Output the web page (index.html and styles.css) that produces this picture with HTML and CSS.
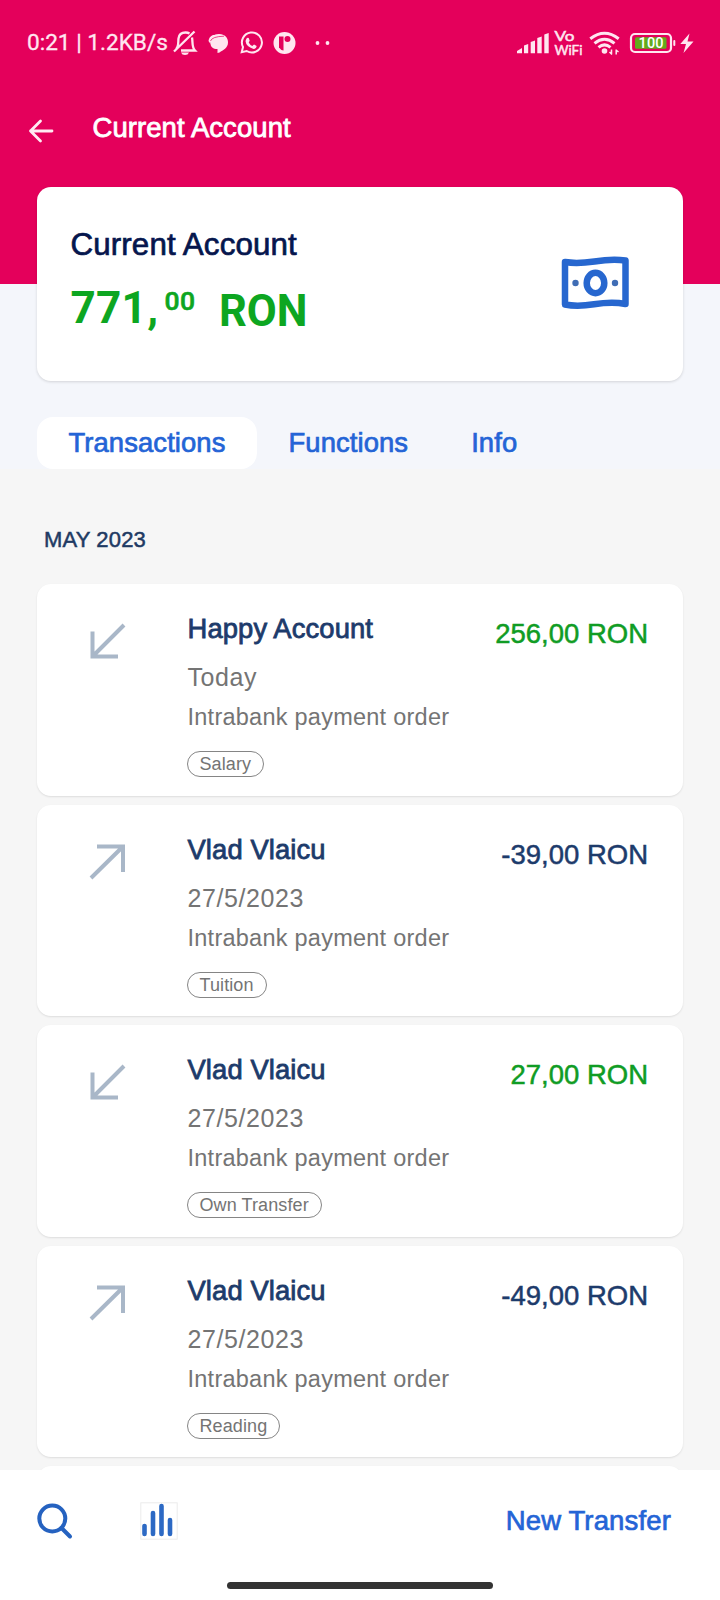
FILE: index.html
```html
<!DOCTYPE html>
<html lang="en">
<head>
<meta charset="utf-8">
<title>Current Account</title>
<link rel="stylesheet" href="styles.css">
</head>
<body>
<svg width="0" height="0" class="defs">
  <symbol id="arrow-in" viewBox="0 0 40 40"><path d="M36 4 5 35M4.500 10.500V35.500H30" fill="none" stroke="#a9b7c8" stroke-width="4"/></symbol>
  <symbol id="arrow-out" viewBox="0 0 40 40"><path d="M3 37 35 5.500M9 5.500H35V31" fill="none" stroke="#a9b7c8" stroke-width="4"/></symbol>
</svg>
<div class="screen">
  <header class="header">
    <div class="status">
      <span class="status-text">0:21 | 1.2KB/s</span>
      <svg class="status-left" width="165" height="30" viewBox="170 28 165 30">
        <g fill="none" stroke="#ffe6f0" stroke-width="2.300">
          <path d="M174 51.500 194.500 31.500M176 49C179 46 178 42 178.500 38.500C179 34.500 182 32.500 185.500 32.500Q188 32.500 189.500 33.500M192 37.500C193 42 191.500 47 195 50.500H181"/>
          <path d="M241.700 52.200 243 47A10 10 0 1 1 246.700 51Z" stroke-width="2"/>
        </g>
        <path d="M181 52.500H189Q188 55 185 55T181 52.500Z" fill="#ffe6f0"/>
        <path d="M219 34C225 34 228 38 228 42.500C228 48 223 50 219.500 52.500L217.500 53V49C213 49 210.500 47 210.500 43C210.500 37 214 34 219 34Z" fill="#ffe6f0"/>
        <path d="M208.500 41Q209 36.500 213 35L223 34.500Q211 35 210.500 44Z" fill="#ffe6f0"/>
        <path d="M210.500 41Q212 36.500 224 36.200" fill="none" stroke="#e4005b" stroke-width=".7"/>
        <path d="M246.500 38.500Q247.500 37.300 248.700 38L249.700 40.800L248.700 42.500Q250 45 252.300 46L254 44.500L256.700 46Q256.500 49 253.500 49Q246 46.500 245.500 41Z" fill="#ffe6f0"/>
        <circle cx="284.500" cy="43" r="11" fill="#ffe6f0"/>
        <path d="M279 36.500H283.500V50.500Q281 50.500 279 47.500Z" fill="#e4005b"/>
        <circle cx="287.500" cy="39" r="3" fill="#e4005b"/>
        <circle cx="317.500" cy="43" r="1.900" fill="#ffe6f0"/>
        <circle cx="327.500" cy="43" r="1.900" fill="#ffe6f0"/>
      </svg>
      <svg class="status-right" width="185" height="32" viewBox="515 27 185 32">
        <g fill="#ffe6f0">
          <path d="M517 53.300V51L522 48V53.300ZM524 53.300V45.500L528.200 44V53.300ZM530.700 53.300V42L535 40.500V53.300ZM537.300 53.300V38L541.700 36.500V53.300ZM544.300 53.300V34.500L548.700 33V53.300Z"/>
          <text x="554.500" y="41" class="vowifi" textLength="20" lengthAdjust="spacingAndGlyphs">Vo</text>
          <text x="554.500" y="55" class="vowifi" textLength="28" lengthAdjust="spacingAndGlyphs">WiFi</text>
          <circle cx="604.500" cy="51" r="2.800"/>
          <path d="M611.500 49.500V54.500M612 54.500 609.500 52M616.200 54.500V49.500M616 50 618.500 52" stroke="#ffe6f0" stroke-width="1.500"/>
          <rect x="673.300" y="40" width="2" height="6" rx="1"/>
          <path d="M689.500 33.500 680.300 44H686L683.500 53L693.500 41.500H687.500Z"/>
        </g>
        <g fill="none" stroke="#ffe6f0" stroke-width="3">
          <path d="M590.300 38.800Q604.500 27.800 618.700 38.800M594.500 43.300Q604.500 35.300 614.500 43.300M598.500 47.300Q604.500 42.500 610.500 47.300"/>
          <rect x="631" y="34" width="40" height="18" rx="4" stroke-width="2.200"/>
        </g>
        <rect x="635" y="37.300" width="31.500" height="11.500" rx="1.500" fill="#62ab1c"/>
        <text x="638.500" y="48.300" class="battery" textLength="25">100</text>
      </svg>
    </div>
    <div class="appbar">
      <svg class="back" width="26" height="26" viewBox="0 0 26 26"><path d="M24 13H2.500M12.500 3 2.500 13 12.500 23" fill="none" stroke="#ffeaf2" stroke-width="2.800" stroke-linecap="round" stroke-linejoin="round"/></svg>
      <h1 class="title">Current Account</h1>
    </div>
  </header>
  <section class="summary">
    <div class="balance-card">
      <div>
        <h2 class="account">Current Account</h2>
        <div class="balance"><span class="whole">771,</span><span class="cents">00</span><span class="currency">RON</span></div>
      </div>
      <svg class="money" width="70" height="54" viewBox="0 0 70 54" fill="none" stroke="#2767cf" stroke-width="6.500">
        <path d="M4 6C28 10 38 1 64.500 4.500V48C38 43 28 53.500 4 48.500Z" stroke-linejoin="round"/>
        <ellipse cx="34.500" cy="27" rx="8.800" ry="10.200"/>
        <circle cx="14.500" cy="27" r="3.200" fill="#3f6db5" stroke="none"/>
        <circle cx="54" cy="27" r="3.200" fill="#3f6db5" stroke="none"/>
      </svg>
    </div>
    <nav class="tabs"><a class="tab active">Transactions</a><a class="tab">Functions</a><a class="tab">Info</a></nav>
  </section>
  <main class="list">
    <h3 class="month">MAY 2023</h3>
    <article class="row">
      <svg class="dir"><use href="#arrow-in"/></svg>
      <div class="info"><div class="name">Happy Account</div><div class="date">Today</div><div class="kind">Intrabank payment order</div><span class="chip">Salary</span></div>
      <div class="amount credit">256,00 RON</div>
    </article>
    <article class="row">
      <svg class="dir"><use href="#arrow-out"/></svg>
      <div class="info"><div class="name">Vlad Vlaicu</div><div class="date">27/5/2023</div><div class="kind">Intrabank payment order</div><span class="chip">Tuition</span></div>
      <div class="amount">-39,00 RON</div>
    </article>
    <article class="row">
      <svg class="dir"><use href="#arrow-in"/></svg>
      <div class="info"><div class="name">Vlad Vlaicu</div><div class="date">27/5/2023</div><div class="kind">Intrabank payment order</div><span class="chip">Own Transfer</span></div>
      <div class="amount credit">27,00 RON</div>
    </article>
    <article class="row">
      <svg class="dir"><use href="#arrow-out"/></svg>
      <div class="info"><div class="name">Vlad Vlaicu</div><div class="date">27/5/2023</div><div class="kind">Intrabank payment order</div><span class="chip">Reading</span></div>
      <div class="amount">-49,00 RON</div>
    </article>
    <article class="row"></article>
  </main>
  <footer class="footer">
    <div class="actions">
      <svg width="38" height="38" viewBox="36 1501 38 38" fill="none" stroke="#2562c0" stroke-width="4"><circle cx="52.300" cy="1517.500" r="13"/><path d="M61.500 1527 70 1535.500" stroke-linecap="round"/></svg>
      <svg class="chart" width="38" height="38" viewBox="140.500 1501.500 38 38" fill="none" stroke="#2c69c4" stroke-width="4.600" stroke-linecap="round"><rect x="141.300" y="1502.300" width="36.400" height="36.400" stroke="#ececec" stroke-width="1"/><path d="M145 1525.500V1533.500M153.500 1512.500V1533.500M162 1505.500V1533.500M170.500 1519.500V1533.500"/></svg>
      <a class="transfer">New Transfer</a>
    </div>
    <div class="home"></div>
  </footer>
</div>
</body>
</html>
```

FILE: styles.css
```css
* { box-sizing: border-box; }
body { margin: 0; font-family: "Liberation Sans", Arial, sans-serif; }
h1, h2, h3 { margin: 0; font-weight: 400; }
svg { display: block; flex: none; }
.defs { display: none; }
.screen { width: 720px; height: 1600px; display: flex; flex-direction: column; overflow: hidden; background: #f6f6f6; }

.header { height: 284px; flex: none; background: #e4005b; }
.status { height: 86px; display: flex; align-items: center; padding: 0 20px 0 27px; }
.status-text { width: 143px; font: 400 22.6px/30px Roboto, sans-serif; color: #ffe6f0; -webkit-text-stroke: .3px #ffe6f0; white-space: nowrap; }
.status-right { margin-left: auto; }
.vowifi { font: 14px Lato, sans-serif; stroke: #ffe6f0; stroke-width: .5px; }
.battery { font: 500 14.500px Roboto, sans-serif; fill: #fff; }
.appbar { height: 84px; display: flex; align-items: center; padding-left: 28px; }
.back { margin-top: 5px; }
.title { margin-left: 38.5px; font-size: 27.5px; line-height: 32px; letter-spacing: .07px; color: #fff; -webkit-text-stroke: .8px #fff; }

.summary { height: 185px; flex: none; padding: 0 37px; background: #f4f6fb; }
.balance-card { height: 194px; margin-top: -97px; padding: 0 52.5px 0 33.5px; display: flex; justify-content: space-between; background: #fff; border-radius: 14px; box-shadow: 0 1px 3px rgba(0, 0, 0, .14); }
.account { margin-top: 38px; font-size: 31.3px; line-height: 40px; letter-spacing: .13px; color: #05164d; -webkit-text-stroke: .7px #05164d; }
.balance { display: flex; height: 60px; margin-top: 13px; font-family: Roboto, sans-serif; font-weight: 700; color: #0da621; line-height: 60px; }
.whole { width: 94px; font-size: 44px; letter-spacing: .3px; }
.cents { font-size: 26.5px; font-weight: 500; line-height: 46px; width: 54.5px; -webkit-text-stroke: .6px #0da621; letter-spacing: .5px; }
.currency { font-size: 43.5px; padding-top: 4px; }
.money { margin-top: 69px; }
.tabs { display: flex; height: 52px; margin-top: 36px; }
.tab { padding: 0 31.500px; border-radius: 16px; font-size: 27.4px; line-height: 51px; letter-spacing: .1px; color: #2464d6; -webkit-text-stroke: .7px #2464d6; }
.tab.active { background: #fff; }

.list { flex: 1; min-height: 0; overflow: hidden; padding: 0 37px; }
.month { height: 115px; padding: 26px 0 0 7px; font-size: 22px; line-height: 89px; letter-spacing: .15px; color: #1e3a63; -webkit-text-stroke: .5px #1e3a63; }
.row { height: 211.500px; margin-bottom: 9px; display: flex; background: #fff; border-radius: 14px; box-shadow: 0 1px 2px rgba(0, 0, 0, .1); }
.dir { width: 40px; height: 40px; margin: 36.5px 60px 0 50.5px; }
.info { flex: 1; padding-top: 29px; color: #747474; white-space: nowrap; }
.name { font-size: 27.4px; line-height: 32px; letter-spacing: .1px; color: #1d3b6b; -webkit-text-stroke: .8px #1d3b6b; }
.date { margin-top: 17.3px; font-size: 25px; line-height: 30px; letter-spacing: .6px; }
.kind { margin: 11.2px 0 20px; font-size: 23.5px; line-height: 28px; letter-spacing: .25px; }
.chip { display: inline-block; vertical-align: top; height: 26px; margin-left: -1px; padding: 0 12px; border: 1px solid #858585; border-radius: 13px; font-size: 18px; line-height: 25px; letter-spacing: .1px; }
.amount { padding: 34px 35px 0 0; font-size: 27.500px; line-height: 32px; color: #1d3b6b; -webkit-text-stroke: .5px #1d3b6b; }
.credit { color: #109c24; -webkit-text-stroke-color: #109c24; }

.footer { height: 130px; flex: none; background: #fff; }
.actions { display: flex; align-items: center; height: 101px; padding: 0 49px 0 36px; }
.chart { margin-left: 66px; }
.transfer { margin-left: auto; font-size: 27.500px; line-height: 32px; letter-spacing: .15px; color: #2464d6; -webkit-text-stroke: .7px #2464d6; }
.home { width: 266px; height: 7px; margin: 11px auto 0; border-radius: 4px; background: #333; }
```
